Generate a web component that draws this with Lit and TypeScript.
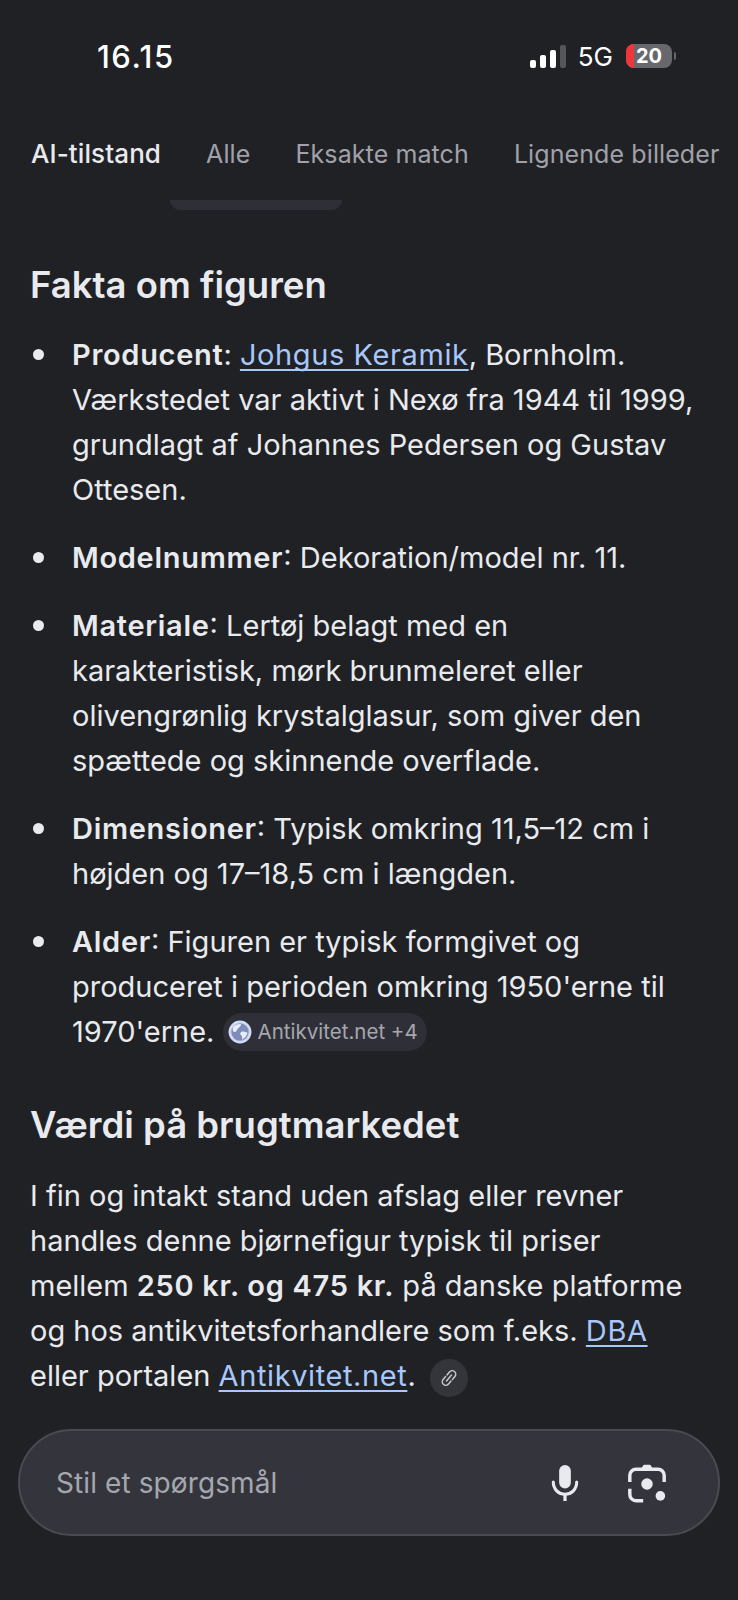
import { LitElement, html, css } from 'lit';
import { customElement } from 'lit/decorators.js';

const micIcon = html`<svg class="ico" width="36" height="40" viewBox="0 0 40 44" fill="none">
  <rect x="13.5" y="2" width="13" height="26" rx="6.5" fill="#e8eaf0"></rect>
  <path d="M7 21c0 8 5.6 13.5 13 13.5S33 29 33 21" stroke="#e8eaf0" stroke-width="3.4" stroke-linecap="round"></path>
  <path d="M20 34v8" stroke="#e8eaf0" stroke-width="3.6"></path>
</svg>`;

const lensIcon = html`<svg class="ico" width="42" height="42" viewBox="0 0 44 44" fill="none">
  <path d="M17 7l2-3h6l2 3z" fill="#e8eaf0" stroke="#e8eaf0" stroke-width="2" stroke-linejoin="round"></path>
  <path d="M4 21v-7a6.500 6.500 0 0 1 6.500-6.500h23A6.500 6.500 0 0 1 40 14v7" stroke="#e8eaf0" stroke-width="3.600"></path>
  <path d="M4 28v6a6.500 6.500 0 0 0 6.500 6.500H18" stroke="#e8eaf0" stroke-width="3.600"></path>
  <circle cx="22" cy="23" r="6" fill="#e8eaf0"></circle>
  <circle cx="36" cy="35.500" r="5" fill="#e8eaf0"></circle>
</svg>`;

const linkIcon = html`<svg width="22" height="22" viewBox="0 0 20 20" fill="none" stroke="#c4c7ce" stroke-width="1.400" stroke-linecap="round">
  <g transform="rotate(-50 10 10)">
    <path d="M9 6.800H5.500a3.200 3.200 0 0 0 0 6.400H9"></path>
    <path d="M11 6.800h3.500a3.200 3.200 0 0 1 0 6.400H11"></path>
    <path d="M6.500 10h7"></path>
  </g>
</svg>`;

const globeIcon = html`<svg width="24" height="24" viewBox="0 0 22 22">
  <circle cx="11" cy="11" r="10.500" fill="#d3daf5"></circle>
  <circle cx="11" cy="11" r="8" fill="#7d8cb8"></circle>
  <path d="M5 6c2-2 5-3 7-2 0 2-2 3-3 4s-1 3-3 3-2-3-1-5zM12 11c2-1 5 0 6 1-1 3-3 5-5 6 0-2 0-3-1-4s-1-2 0-3z" fill="#e8ecfa"></path>
</svg>`;

@customElement('app-root')
export class AppRoot extends LitElement {
  static styles = css`
    :host {
      display: block;
      width: 738px;
      height: 1600px;
      overflow: hidden;
      background: #202125;
      color: #e8eaed;
      font-family: 'Inter', 'Liberation Sans', sans-serif;
    }
    .page {
      display: flex;
      flex-direction: column;
      height: 1600px;
    }
    .status {
      display: flex;
      align-items: center;
      justify-content: space-between;
      height: 40px;
      margin-top: 36px;
      padding: 0 62px 0 97px;
    }
    .time {
      font-size: 31px;
      font-weight: 500;
      color: #fff;
      letter-spacing: 1.5px;
    }
    .sys {
      display: flex;
      align-items: center;
      gap: 12px;
    }
    .bars {
      display: flex;
      align-items: flex-end;
      gap: 4px;
      height: 23px;
    }
    .bars i {
      display: block;
      width: 6px;
      border-radius: 2px;
      background: #fff;
    }
    .net {
      font-size: 26px;
      font-weight: 400;
      color: #fff;
    }
    .batt {
      display: flex;
      align-items: center;
      gap: 2px;
      margin-left: 1px;
    }
    .cell {
      position: relative;
      width: 46px;
      height: 24px;
      border-radius: 8px;
      overflow: hidden;
      background: #67686d;
      text-align: center;
      font-size: 20px;
      font-weight: 700;
      line-height: 24px;
      color: #fff;
    }
    .cell b {
      position: absolute;
      left: 0;
      top: 0;
      bottom: 0;
      width: 8px;
      background: #f0353b;
    }
    .cell span {
      position: relative;
    }
    .nub {
      width: 2px;
      height: 8px;
      border-radius: 0 2px 2px 0;
      background: #67686d;
    }
    .tabs {
      display: flex;
      gap: 45px;
      margin-top: 58px;
      padding-left: 31px;
      white-space: nowrap;
      font-size: 25px;
      line-height: 40px;
      color: #a0a1a9;
      letter-spacing: 0.1px;
    }
    .tabs .on {
      color: #e8eaed;
      font-weight: 500;
      font-size: 26px;
    }
    .chip-tail {
      width: 172px;
      height: 10px;
      margin: 26px 0 0 170px;
      border-radius: 0 0 14px 14px;
      background: #2f3037;
    }
    .body {
      padding: 0 0 0 30px;
      white-space: nowrap;
      font-size: 29px;
      line-height: 45px;
    }
    h2 {
      margin: 52px 0 24px;
      font-size: 36.5px;
      line-height: 46px;
      font-weight: 600;
    }
    ul {
      margin: 0;
      padding: 0;
      list-style: none;
      display: flex;
      flex-direction: column;
      gap: 23px;
    }
    li {
      position: relative;
      padding-left: 42px;
    }
    li::before {
      content: '';
      position: absolute;
      left: 3px;
      top: 17px;
      width: 11px;
      height: 11px;
      border-radius: 50%;
      background: #e8eaed;
    }
    b.k {
      font-weight: 600;
      letter-spacing: 0.7px;
    }
    a {
      color: #a8c7fa;
      text-decoration: underline;
      text-decoration-skip-ink: none;
      text-underline-offset: 4px;
      text-decoration-thickness: 2px;
      letter-spacing: 0.6px;
    }
    .src {
      display: inline-flex;
      align-items: center;
      gap: 6px;
      height: 38px;
      padding: 0 9px 0 5px;
      border-radius: 19px;
      background: #2f3037;
      color: #a5a7ae;
      font-size: 20.5px;
      line-height: 38px;
      vertical-align: -2px;
    }
    .h2b {
      margin-top: 48px;
      margin-bottom: 25px;
    }
    .lnk {
      display: inline-flex;
      align-items: center;
      justify-content: center;
      width: 38px;
      height: 38px;
      margin-left: 6px;
      border-radius: 50%;
      background: #34353b;
      vertical-align: middle;
    }
    .ask {
      display: flex;
      align-items: center;
      box-sizing: border-box;
      height: 107px;
      margin: 31px 18px 0 18px;
      padding: 0 50px 0 36px;
      border: 2px solid #4a4b52;
      border-radius: 54px;
      background: #34353c;
    }
    .ph {
      flex: 1;
      font-size: 28px;
      color: #a5a7ae;
      letter-spacing: 0.1px;
    }
    .ask-icons {
      display: flex;
      align-items: center;
      gap: 43px;
    }
    .ico {
      display: block;
    }
  `;

  render() {
    return html`<div class="page">
      <div class="status">
        <span class="time">16.15</span>
        <div class="sys">
          <div class="bars">
            <i style="height:8px"></i><i style="height:13px"></i><i style="height:18px"></i
            ><i style="height:23px;background:#55565b"></i>
          </div>
          <span class="net">5G</span>
          <div class="batt">
            <div class="cell"><b></b><span>20</span></div>
            <div class="nub"></div>
          </div>
        </div>
      </div>
      <nav class="tabs">
        <span class="on">AI-tilstand</span><span>Alle</span><span>Eksakte match</span
        ><span>Lignende billeder</span>
      </nav>
      <div class="chip-tail"></div>
      <section class="body">
        <h2>Fakta om figuren</h2>
        <ul>
          <li>
            <b class="k">Producent</b>: <a>Johgus Keramik</a>, Bornholm.<br />
            Værkstedet var aktivt i Nexø fra 1944 til 1999,<br />
            grundlagt af Johannes Pedersen og Gustav<br />
            Ottesen.
          </li>
          <li><b class="k">Modelnummer</b>: Dekoration/model nr. 11.</li>
          <li>
            <b class="k">Materiale</b>: Lertøj belagt med en<br />
            karakteristisk, mørk brunmeleret eller<br />
            olivengrønlig krystalglasur, som giver den<br />
            spættede og skinnende overflade.
          </li>
          <li>
            <b class="k">Dimensioner</b>: Typisk omkring 11,5–12 cm i<br />
            højden og 17–18,5 cm i længden.
          </li>
          <li>
            <b class="k">Alder</b>: Figuren er typisk formgivet og<br />
            produceret i perioden omkring 1950'erne til<br />
            1970'erne. <span class="src">${globeIcon}Antikvitet.net +4</span>
          </li>
        </ul>
        <h2 class="h2b">Værdi på brugtmarkedet</h2>
        <div>
          I fin og intakt stand uden afslag eller revner<br />
          handles denne bjørnefigur typisk til priser<br />
          mellem <b class="k">250 kr. og 475 kr.</b> på danske platforme<br />
          og hos antikvitetsforhandlere som f.eks. <a>DBA</a><br />
          eller portalen <a>Antikvitet.net</a>. <span class="lnk">${linkIcon}</span>
        </div>
      </section>
      <div class="ask">
        <span class="ph">Stil et spørgsmål</span>
        <div class="ask-icons">${micIcon}${lensIcon}</div>
      </div>
    </div>`;
  }
}
